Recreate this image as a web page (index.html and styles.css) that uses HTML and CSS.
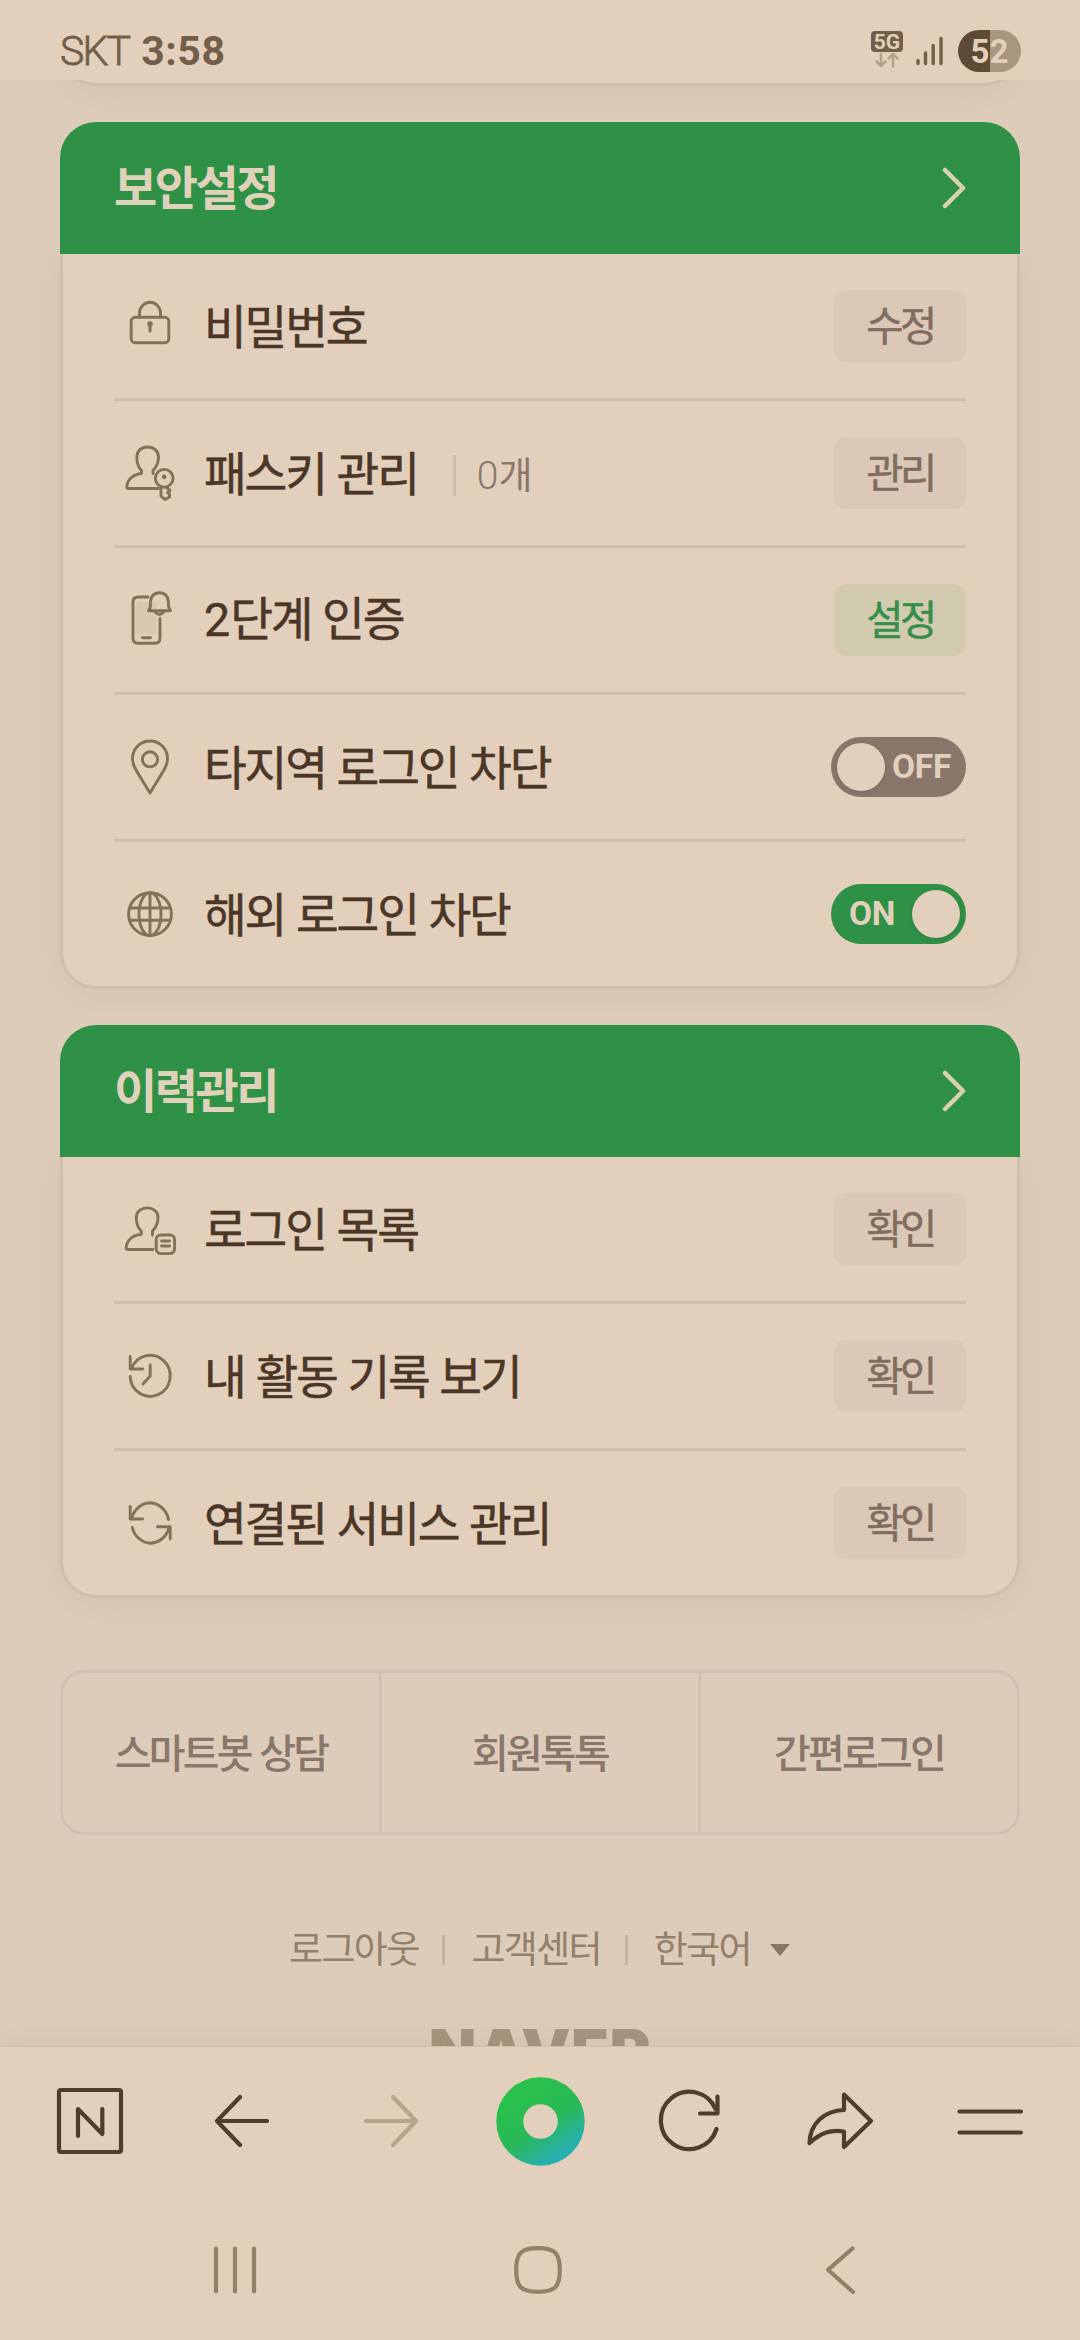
FILE: index.html
```html
<!DOCTYPE html>
<html lang="ko">
<head>
<meta charset="utf-8">
<title>보안설정</title>
<link rel="stylesheet" href="styles.css">
</head>
<body>
<div class="screen">
  <header class="status">
    <div class="status-left"><span class="carrier">SKT</span><span class="clock">3:58</span></div>
    <div class="status-right">
      <div class="net">
        <span class="net-badge">5G</span>
        <svg class="net-arrows" viewBox="0 0 32 16"><path d="M10 2V14M5.500 9.500L10 14L14.500 9.500M22 14.500V2M17.500 6.500L22 2L26.500 6.500"/></svg>
      </div>
      <svg class="signal" viewBox="0 0 28 32"><path d="M2 26.500V29.500M9.500 19V29.500M17.200 11.500V29.500M25 4.500V29.500"/></svg>
      <div class="battery">52</div>
    </div>
  </header>

  <main class="page">
    <section class="card card-prev"></section>

    <section class="group">
      <div class="group-head"><h2>보안설정</h2><svg class="chev" viewBox="0 0 24 42"><path d="M3 3L21 21L3 39"/></svg></div>
      <ul class="card">
        <li class="row">
          <svg class="icon" viewBox="0 0 60 60"><rect x="11.200" y="21.300" width="37.600" height="25.400" rx="4"/><path d="M19.500 21V17.200a10.500 11 0 0 1 21 0V21"/><path class="thick" d="M30 27V35"/><circle class="solid" cx="30" cy="28" r="2.800"/></svg>
          <span class="label">비밀번호</span><span class="chip">수정</span>
        </li>
        <li class="row">
          <svg class="icon" viewBox="0 0 60 60"><path d="M33 30.500V27.500C36.500 24 38.500 19 38.500 14C38.500 7.500 33.500 4 27.600 4S16.800 7.500 16.800 14C16.800 19 18 24 21.500 27.500V30.500C12 31.500 7 37.500 6.800 44Q6.800 45.500 8.500 45.500H38.500"/><circle cx="44.200" cy="35.300" r="8.900"/><circle class="solid" cx="44.200" cy="33.800" r="2.400"/><path d="M41 44V53L45 56.500L49.500 54V51L47.500 49.500L50 47.300L47.500 45.500V44"/></svg>
          <span class="label">패스키 관리</span><span class="count"><span class="num">0</span>개</span><span class="chip">관리</span>
        </li>
        <li class="row">
          <svg class="icon" viewBox="0 0 60 60"><rect class="glass" x="16.500" y="12" width="20" height="32"/><path d="M28 7H18Q13 7 13 12V48Q13 53.300 18 53.300H35Q40 53.300 40 48V28.500"/><path d="M22.500 47.700H30.500"/><path d="M28.500 20.700C31.500 18 30 14 30.500 11C31.500 5.500 35 2.800 39.400 2.800S47.500 5.500 48.300 11C48.800 14 47.500 18 50.500 20.700Z"/><path d="M35 21.500Q39.400 27.500 44 21.500"/></svg>
          <span class="label"><span class="num">2</span>단계 인증</span><span class="chip chip-on">설정</span>
        </li>
        <li class="row">
          <svg class="icon" viewBox="0 0 60 60"><path d="M30 56C25 47.500 18 37 14.500 30C13.200 27 12.500 24.500 12.500 21.500C12.500 11.500 20.500 4 30 4S47.500 11.500 47.500 21.500C47.500 24.500 46.800 27 45.500 30C42 37 35 47.500 30 56Z"/><circle cx="30" cy="22.300" r="7.600"/></svg>
          <span class="label">타지역 로그인 차단</span><span class="toggle off"><i></i><b>OFF</b></span>
        </li>
        <li class="row">
          <svg class="icon" viewBox="0 0 60 60"><circle cx="30" cy="30.200" r="21.400"/><ellipse cx="30" cy="30.200" rx="11" ry="21.400"/><path d="M30 9V51.500M10 24H50M10 36.200H50"/></svg>
          <span class="label">해외 로그인 차단</span><span class="toggle on"><b>ON</b><i></i></span>
        </li>
      </ul>
    </section>

    <section class="group">
      <div class="group-head"><h2>이력관리</h2><svg class="chev" viewBox="0 0 24 42"><path d="M3 3L21 21L3 39"/></svg></div>
      <ul class="card">
        <li class="row">
          <svg class="icon" viewBox="0 0 60 60"><path d="M32.500 36V32C36 28.500 38 23.500 38 18.500C38 12.500 33 8.900 27.200 8.900S16.300 12.500 16.300 18.500C16.300 23.500 17.500 28.500 21.200 32V35.200C11.500 36.500 6.500 42 6.200 49Q6.200 50.500 8 50.500H33"/><rect x="36.200" y="36" width="18.400" height="18.600" rx="4.500"/><path d="M41.500 42H49.500M41.500 47H49.500"/></svg>
          <span class="label">로그인 목록</span><span class="chip">확인</span>
        </li>
        <li class="row">
          <svg class="icon" viewBox="0 0 60 60"><path d="M10.200 30.500A20 20.500 0 1 0 11.500 22.500"/><path d="M10.200 10.500V23H22.700M30.200 19V30L23 38"/></svg>
          <span class="label">내 활동 기록 보기</span><span class="chip">확인</span>
        </li>
        <li class="row">
          <svg class="icon" viewBox="0 0 60 60"><path d="M12 24A20 20.500 0 0 1 30 9.800A20 20.500 0 0 1 48.500 26.500M12.300 34.500A20 20.500 0 0 0 30 50.200A20 20.500 0 0 0 48.800 35.500"/><path d="M10.200 13.500V26H22.700M50.200 46V33.700H37.500"/></svg>
          <span class="label">연결된 서비스 관리</span><span class="chip">확인</span>
        </li>
      </ul>
    </section>

    <nav class="help"><a>스마트봇 상담</a><a>회원톡톡</a><a>간편로그인</a></nav>

    <footer class="foot">
      <div class="links"><span>로그아웃</span><span>고객센터</span><span>한국어</span><svg class="caret" viewBox="0 0 22 14"><path d="M1 1H21L11 13Z"/></svg></div>
      <div class="brand">NAVER</div>
    </footer>
  </main>

  <nav class="toolbar">
    <svg viewBox="0 0 90 90"><rect x="14" y="14" width="62" height="62" rx="2"/><path d="M33 60V33L57.300 58V33"/></svg>
    <svg viewBox="0 0 90 90"><path d="M72 45H22M45 21L22 45L45 69"/></svg>
    <svg class="dim" viewBox="0 0 90 90"><path d="M21 45H71M48 21L71 45L48 69"/></svg>
    <svg viewBox="0 0 90 90"><defs><linearGradient id="dot" x1="0.200" y1="0" x2="0.850" y2="1"><stop offset="0" stop-color="#29c14b"/><stop offset="0.550" stop-color="#29b957"/><stop offset="1" stop-color="#27b0ae"/></linearGradient></defs><circle class="ring" cx="45.500" cy="45.500" r="30.700"/></svg>
    <svg viewBox="0 0 90 90"><path d="M71.500 53A28.500 28.700 0 1 1 70.500 33"/><path d="M72.500 20.500V37.500H55"/></svg>
    <svg viewBox="0 0 90 90"><path d="M49 18.500L76 45L49 71V55.500C36 53 26 57 14.500 67C15 48 29 34.500 49 34Z"/></svg>
    <svg viewBox="0 0 90 90"><path d="M14.500 35.500H76M14.500 56.500H76"/></svg>
  </nav>
  <nav class="sysbar">
    <svg viewBox="0 0 60 60"><path d="M11 8.500V51.500M30 8.500V51.500M49 8.500V51.500"/></svg>
    <svg viewBox="0 0 60 60"><path d="M30 8.200C47 8.200 51.800 13 51.800 30S47 51.800 30 51.800S8.200 47 8.200 30S13 8.200 30 8.200Z"/></svg>
    <svg viewBox="0 0 60 60"><path d="M42.500 8.500L18 29.800L43 52"/></svg>
  </nav>
</div>
</body>
</html>
```
FILE: styles.css
```css
* { box-sizing: border-box; margin: 0; padding: 0; }
body { background: #ddccb9; font-family: "Noto Sans CJK KR", "Noto Sans", sans-serif; }
svg { fill: none; stroke-linecap: round; stroke-linejoin: round; flex: none; }
.screen { width: 1080px; height: 2340px; display: flex; flex-direction: column; overflow: hidden; }

.status { position: relative; z-index: 1; height: 80px; flex: none; padding: 0 59px 0 60px; display: flex; justify-content: space-between; background: #e2d0bc; color: #735f49; }
.status-left { display: flex; gap: 12px; padding-top: 22px; font: 41px/58px Roboto, sans-serif; }
.carrier { font-weight: 300; letter-spacing: -1.800px; -webkit-text-stroke: 0.800px #735f49; }
.clock { font-weight: 700; letter-spacing: 0.500px; }
.status-right { display: flex; padding-top: 30px; }
.net { width: 32px; margin: 1px 13px 0 0; }
.net-badge { display: block; height: 21px; border-radius: 4px; background: #735f49; color: #e2d0bc; font: 700 21px/22px Roboto, sans-serif; text-align: center; }
.net-arrows { display: block; width: 32px; height: 16px; stroke: #b5a18b; stroke-width: 2.500; }
.signal { width: 28px; height: 32px; margin: 4px 14px 0 0; stroke: #735f49; stroke-width: 3.400; }
.battery { width: 63px; height: 42px; border-radius: 21px; background: linear-gradient(90deg, #5e4b36 32px, #a99680 32px); color: #e2d0bc; font: 700 33px/43px Roboto, sans-serif; text-align: center; }

.page { flex: 1; min-height: 0; padding: 0 60px; overflow: hidden; }
.card { list-style: none; padding: 0 51px; background: #e2d0bc; border: 3px solid #cfbfae; border-top: 0; border-radius: 0 0 36px 36px; box-shadow: 0 6px 30px rgba(110, 75, 55, 0.080); }
.card-prev { height: 80px; margin-top: -74px; }
.group { margin-top: 36px; }
.group-head { position: relative; height: 132px; padding: 0 54px; display: flex; align-items: center; justify-content: space-between; border-radius: 36px 36px 0 0; background: #2e9146; }
.group-head h2 { padding-bottom: 6px; font-size: 47px; font-weight: 700; line-height: 66px; letter-spacing: -2.500px; color: #e0d2ba; }
.chev { width: 24px; height: 42px; stroke: #d9d0b2; stroke-width: 4.500; }
.row { height: 147px; padding: 0 0 0 6px; display: flex; align-items: center; border-bottom: 3px solid #cfbfae; }
.row:last-child { height: 144px; border-bottom: 0; }
.icon { width: 60px; height: 60px; margin-right: 24px; stroke: #857159; stroke-width: 2.900; }
.icon .thick { stroke-width: 3; }
.icon .solid { fill: #857159; stroke: none; }
.icon .glass { fill: #d9c7b1; stroke: none; }
.label { padding-bottom: 5px; font-size: 46.500px; font-weight: 400; line-height: 66px; letter-spacing: -2.200px; color: #4b3627; -webkit-text-stroke: 0.500px #4b3627; }
.num { font-family: Roboto, sans-serif; letter-spacing: 0; }
.count { margin: 5px 0 0 35px; padding-left: 21px; font-size: 37px; line-height: 37px; font-weight: 400; letter-spacing: -1.500px; color: #8a776b; border-left: 3px solid #cfbfae; }
.count .num { font-size: 39px; font-weight: 300; line-height: 1; }
.chip { width: 132px; height: 72px; margin-left: auto; border-radius: 12px; background: #dbc8b6; color: #806d5f; font-size: 40.500px; font-weight: 400; line-height: 68px; letter-spacing: -3.400px; text-align: center; -webkit-text-stroke: 0.500px currentColor; }
.chip-on { background: #d3cbb0; color: #368f49; }
.toggle { width: 135px; height: 60px; margin-left: auto; padding: 6px; display: flex; border-radius: 30px; color: #e2d0bc; }
.toggle i { width: 48px; height: 48px; border-radius: 50%; background: #e2d0bc; box-shadow: 0 1px 4px rgba(60, 40, 30, 0.180); }
.toggle b { font: 700 33.500px/47px Roboto, sans-serif; letter-spacing: -0.300px; }
.off { background: #8a776c; }
.off b { margin-left: 7px; }
.on { background: #2e9146; justify-content: space-between; }
.on b { margin-left: 12px; }

.help { height: 165px; margin-top: 72px; display: flex; border: 3px solid #d2c1b1; border-radius: 24px; }
.help a { flex: 1; font-size: 40px; font-weight: 500; line-height: 156px; letter-spacing: -2.800px; text-align: center; color: #8a776c; }
.help a + a { border-left: 3px solid #d2c1b1; }
.foot { padding-top: 85px; }
.links { display: flex; align-items: center; justify-content: center; color: #93806a; font-size: 37px; line-height: 54px; font-weight: 400; letter-spacing: -1.700px; }
.links span + span { display: flex; align-items: center; }
.links span + span::before { content: ""; width: 3px; height: 30px; margin: 6px 26px 0 24px; background: #c4b39e; }
.caret { width: 22px; height: 14px; margin: 6px 0 0 18px; fill: #8a775f; }
.brand { margin-top: 40px; text-align: center; color: #a69580; font: 900 62px/76px Inter, sans-serif; letter-spacing: 0.500px; }

.toolbar { position: relative; height: 148px; flex: none; padding: 0 45px; display: flex; justify-content: space-between; background: #e2d0bc; border-top: 1px solid #d0bfad; box-shadow: 0 -4px 24px rgba(110, 80, 60, 0.080); }
.toolbar svg { width: 90px; height: 90px; margin-top: 29px; stroke: #4f3e2d; stroke-width: 4.200; }
.toolbar .dim { stroke: #b6a48e; }
.toolbar .ring { stroke: url(#dot); stroke-width: 27px; }
.sysbar { position: relative; height: 146px; flex: none; padding: 46px 210px 0 205px; display: flex; justify-content: space-between; background: #e2d0bc; }
.sysbar svg { width: 60px; height: 60px; stroke: #93816c; stroke-width: 4.200; }
```
